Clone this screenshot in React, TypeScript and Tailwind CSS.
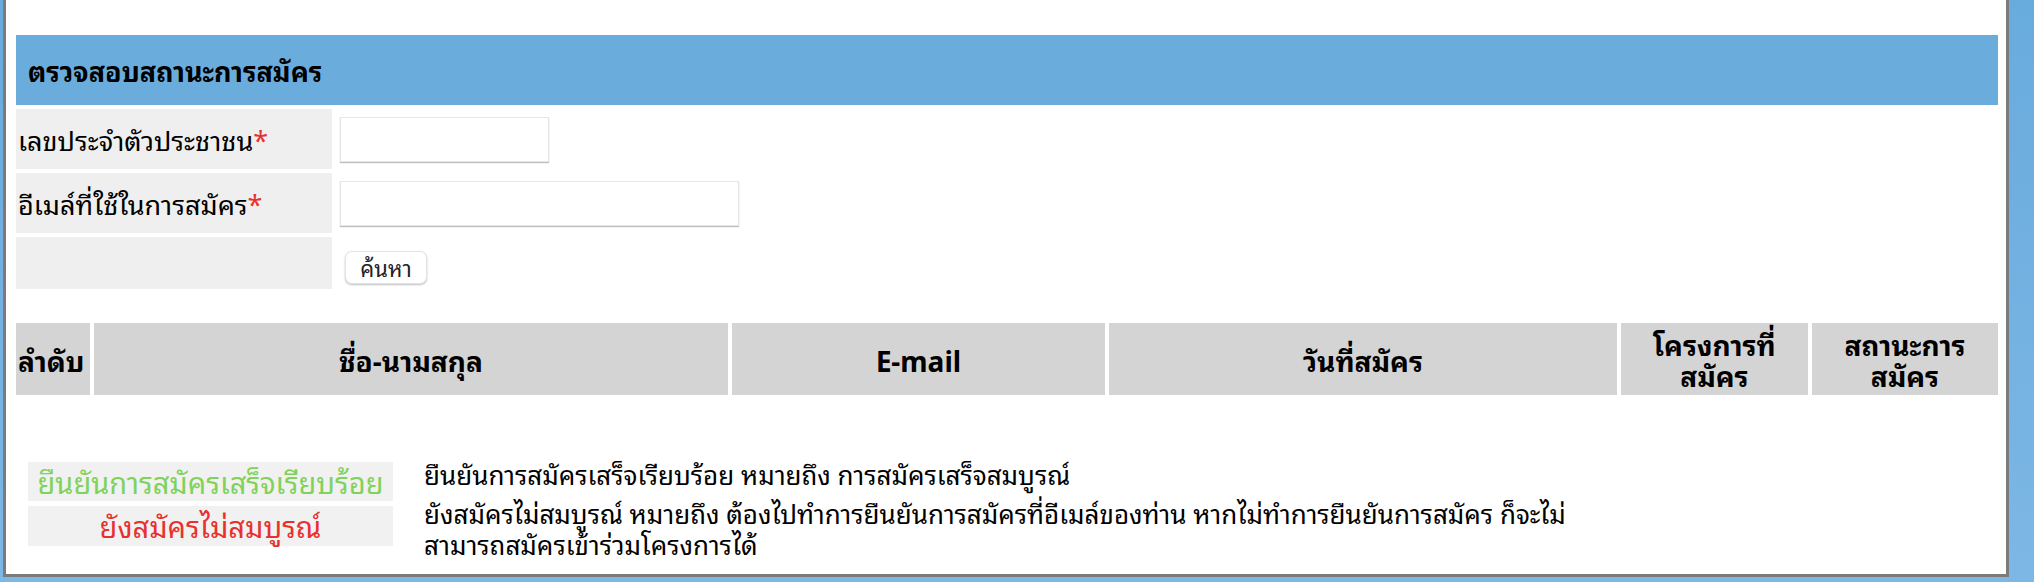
import React from "react";

const thai = "font-['Tahoma','Noto_Sans_Thai_Looped','Noto_Sans_Thai','Noto_Sans','DejaVu_Sans',sans-serif]";

const columns = [
  { label: ["ลำดับ"], w: "w-[74px]", left: true },
  { label: ["ชื่อ-นามสกุล"], w: "w-[634px]" },
  { label: ["E-mail"], w: "w-[373px]" },
  { label: ["วันที่สมัคร"], w: "w-[508px]" },
  { label: ["โครงการที่", "สมัคร"], w: "w-[187px]" },
  { label: ["สถานะการ", "สมัคร"], w: "w-[186px]" },
];

function FormRow({
  label,
  required,
  height,
  children,
}: {
  label?: string;
  required?: boolean;
  height: string;
  children: React.ReactNode;
}) {
  return (
    <div className={`flex gap-[4px] ${height}`}>
      <div className="w-[316px] bg-[#efefef] flex items-center pl-[2px] text-[27px] text-black whitespace-nowrap">
        {label}
        {required && <span className="text-[#e8312f]">*</span>}
      </div>
      <div className="flex-1 flex items-center pl-[4px]">{children}</div>
    </div>
  );
}

export default function App() {
  return (
    <div className={`w-[2034px] h-[582px] bg-gradient-to-b from-[#68abdd] to-[#7db7e5] ${thai}`}>
      <div className="ml-[3px] w-[2006px] h-[577px] bg-white border-x-[3px] border-b-[3px] border-[#7b7b7b] px-[10px] pr-[8px] pt-[35px]">
        <div className="h-[70px] bg-[#6aaddd] flex items-center pl-[12px]">
          <h2 className="text-[27px] font-bold text-black">ตรวจสอบสถานะการสมัคร</h2>
        </div>

        <div className="flex flex-col gap-[4px] mt-[4px]">
          <FormRow label="เลขประจำตัวประชาชน" required height="h-[60px]">
            <input
              type="text"
              className="w-[209px] h-[45px] bg-white border border-[#e6e6e6] shadow-[0_1px_1px_rgba(0,0,0,0.25)] outline-none"
            />
          </FormRow>
          <FormRow label="อีเมล์ที่ใช้ในการสมัคร" required height="h-[60px]">
            <input
              type="text"
              className="w-[399px] h-[45px] bg-white border border-[#e6e6e6] shadow-[0_1px_1px_rgba(0,0,0,0.25)] outline-none"
            />
          </FormRow>
          <FormRow height="h-[52px]">
            <button className="ml-[5px] mt-[8px] w-[82px] h-[33px] rounded-[7px] bg-white border border-[#e3e3e3] shadow-[0_1px_2px_rgba(0,0,0,0.25)] text-[22px] text-[#222] leading-none">
              ค้นหา
            </button>
          </FormRow>
        </div>

        <div className="flex gap-[4px] mt-[34px] h-[72px]">
          {columns.map((c) => (
            <div
              key={c.label.join()}
              className={`${c.w} bg-[#d4d4d4] flex flex-col justify-center px-[2px] text-[28px] leading-[31px] font-bold text-black whitespace-nowrap ${
                c.left ? "items-start" : "items-center"
              }`}
            >
              {c.label.map((l) => (
                <span key={l}>{l}</span>
              ))}
            </div>
          ))}
        </div>

        <div className="flex mt-[67px] gap-[31px]">
          <div className="flex flex-col gap-[5px] pl-[12px]">
            <div className="w-[365px] h-[39px] bg-[#f1f1f1] flex items-center justify-center text-[29px] text-[#7fd35b] whitespace-nowrap">
              ยืนยันการสมัครเสร็จเรียบร้อย
            </div>
            <div className="w-[365px] h-[40px] bg-[#f1f1f1] flex items-center justify-center text-[29px] text-[#e8312f] whitespace-nowrap">
              ยังสมัครไม่สมบูรณ์
            </div>
          </div>
          <div className="text-[26px] leading-[31px] text-black -mt-[4px] whitespace-nowrap">
            <p className="mb-[8px]">ยืนยันการสมัครเสร็จเรียบร้อย หมายถึง การสมัครเสร็จสมบูรณ์</p>
            <p>
              ยังสมัครไม่สมบูรณ์ หมายถึง ต้องไปทำการยืนยันการสมัครที่อีเมล์ของท่าน หากไม่ทำการยืนยันการสมัคร ก็จะไม่
              <br />
              สามารถสมัครเข้าร่วมโครงการได้
            </p>
          </div>
        </div>
      </div>
    </div>
  );
}
